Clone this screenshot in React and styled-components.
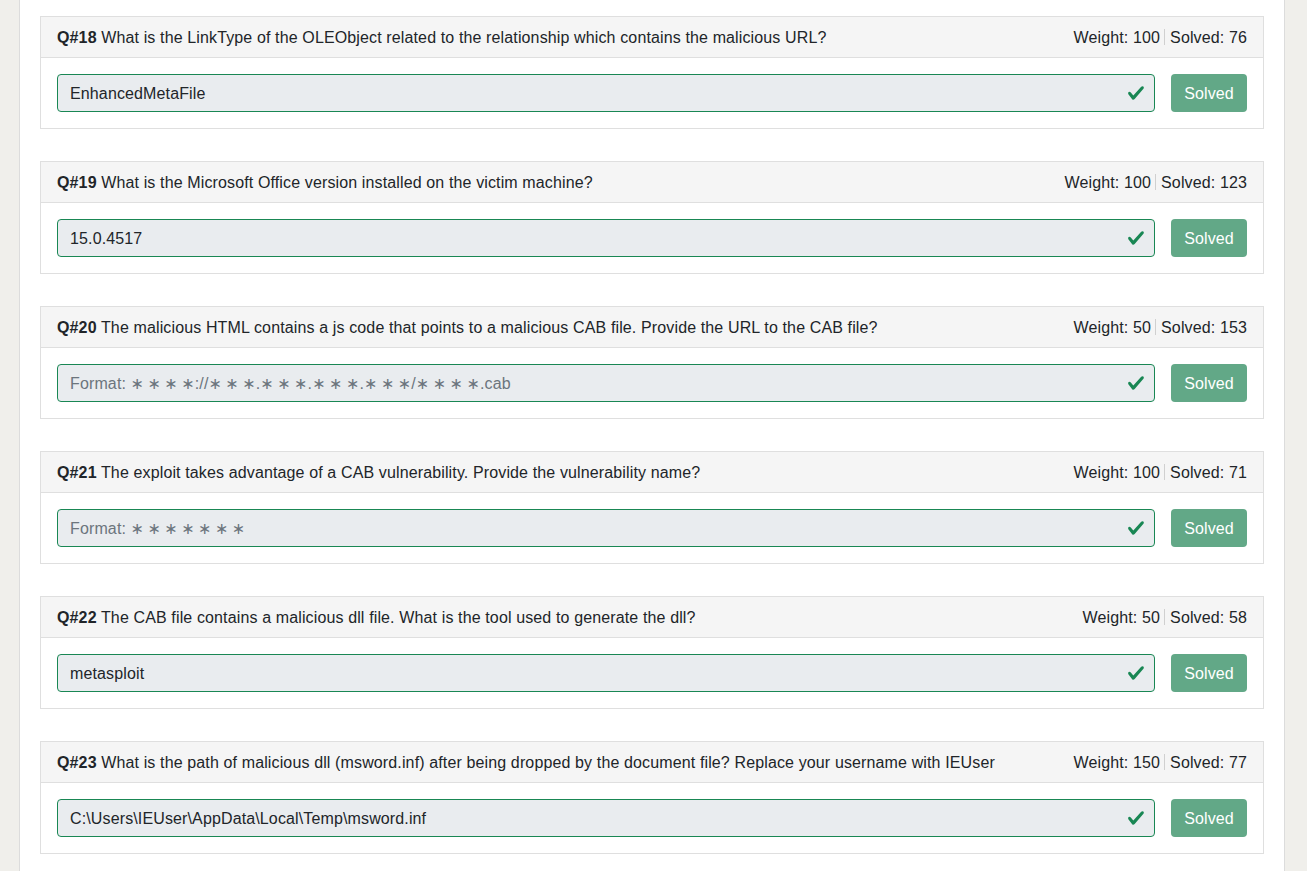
import React from 'react'
import styled, { createGlobalStyle } from 'styled-components'

// thin-spaced asterisk groups used by the format hints
const stars = (n) => Array(n).fill('∗').join('\u2009')

const questions = [
  {
    id: 18,
    text: 'What is the LinkType of the OLEObject related to the relationship which contains the malicious URL?',
    weight: 100,
    solved: 76,
    value: 'EnhancedMetaFile',
  },
  {
    id: 19,
    text: 'What is the Microsoft Office version installed on the victim machine?',
    weight: 100,
    solved: 123,
    value: '15.0.4517',
  },
  {
    id: 20,
    text: 'The malicious HTML contains a js code that points to a malicious CAB file. Provide the URL to the CAB file?',
    weight: 50,
    solved: 153,
    placeholder: `Format: ${ stars(4) }://${ stars(3) }.${ stars(3) }.${ stars(3) }.${ stars(3) }/${ stars(4) }.cab`,
  },
  {
    id: 21,
    text: 'The exploit takes advantage of a CAB vulnerability. Provide the vulnerability name?',
    weight: 100,
    solved: 71,
    placeholder: `Format: ${ stars(7) }`,
  },
  {
    id: 22,
    text: 'The CAB file contains a malicious dll file. What is the tool used to generate the dll?',
    weight: 50,
    solved: 58,
    value: 'metasploit',
  },
  {
    id: 23,
    text: 'What is the path of malicious dll (msword.inf) after being dropped by the document file? Replace your username with IEUser',
    weight: 150,
    solved: 77,
    value: 'C:\\Users\\IEUser\\AppData\\Local\\Temp\\msword.inf',
  },
]

const GlobalStyle = createGlobalStyle`
  body {
    margin: 0;
    background: #f0efeb;
    font-family: "Liberation Sans", "DejaVu Sans", Arial, sans-serif;
    color: #212529;
  }
`

const Page = () => {
  return (
    <>
      <GlobalStyle/>
      <Container>
        {
          questions.map((q) => <Question key={ q.id } question={ q }/>)
        }
      </Container>
    </>
  )
}

const Question = ({question}) => {
  return (
    <Card>
      <Header>
        <Title><b>Q#{ question.id }</b> { question.text }</Title>
        <Stats>
          <span>Weight: { question.weight }</span>
          <Divider/>
          <span>Solved: { question.solved }</span>
        </Stats>
      </Header>
      <Body>
        <Field>
          <Answer
            disabled
            value={ question.value || '' }
            placeholder={ question.placeholder }
            readOnly
          />
          <CheckIcon viewBox='0 0 8 8'>
            <path
              fill='#198754'
              d='M2.3 6.73.6 4.53c-.4-1.04.46-1.4 1.1-.8l1.1 1.4 3.4-3.8c.6-.63 1.6-.27 1.2.7l-4 4.6c-.43.5-.8.4-1.1.1z'
            />
          </CheckIcon>
        </Field>
        <SolvedButton disabled>Solved</SolvedButton>
      </Body>
    </Card>
  )
}

const Container = styled.div`
  box-sizing: border-box;
  width: 1266px;
  min-height: 100vh;
  margin-left: 19px;
  padding: 16px 20px 1px;
  background: #fff;
  border-left: 1px solid #dcdcdc;
  border-right: 1px solid #dcdcdc;
`
const Card = styled.div`
  border: 1px solid #dfdfdf;
  margin-bottom: 32px;
  background: #fff;
`
const Header = styled.div`
  display: flex;
  align-items: center;
  justify-content: space-between;
  padding: 9px 16px 7px;
  line-height: 24px;
  font-size: 16px;
  letter-spacing: 0.13px;
  background: #f5f5f5;
  border-bottom: 1px solid #dfdfdf;
`
const Title = styled.div`
  white-space: nowrap;
`
const Stats = styled.div`
  display: flex;
  align-items: center;
  white-space: nowrap;
`
const Divider = styled.span`
  display: inline-block;
  width: 1px;
  height: 16px;
  margin: -2px 5px 0 4px;
  background: #d0d0d0;
`
const Body = styled.div`
  display: flex;
  gap: 16px;
  padding: 16px;
`
const Field = styled.div`
  position: relative;
  flex: 1;
  display: flex;
`
const Answer = styled.input`
  box-sizing: border-box;
  width: 100%;
  height: 38px;
  padding: 7px 36px 5px 12px;
  font-family: inherit;
  font-size: 16px;
  line-height: 24px;
  letter-spacing: 0.13px;
  color: #212529;
  background: #e9ecef;
  border: 1px solid #198754;
  border-radius: 4px;
  opacity: 1;
  -webkit-text-fill-color: #212529;

  &::placeholder {
    color: #6c757d;
    -webkit-text-fill-color: #6c757d;
    opacity: 1;
  }
`
const CheckIcon = styled.svg`
  position: absolute;
  right: 10px;
  top: 10px;
  width: 18px;
  height: 18px;
`
const SolvedButton = styled.button`
  box-sizing: border-box;
  width: 76px;
  height: 38px;
  padding: 7px 12px 5px;
  font-family: inherit;
  font-size: 16px;
  line-height: 24px;
  letter-spacing: 0.13px;
  color: #fff;
  background: #62a887;
  border: none;
  border-radius: 4px;
`

export default Page
